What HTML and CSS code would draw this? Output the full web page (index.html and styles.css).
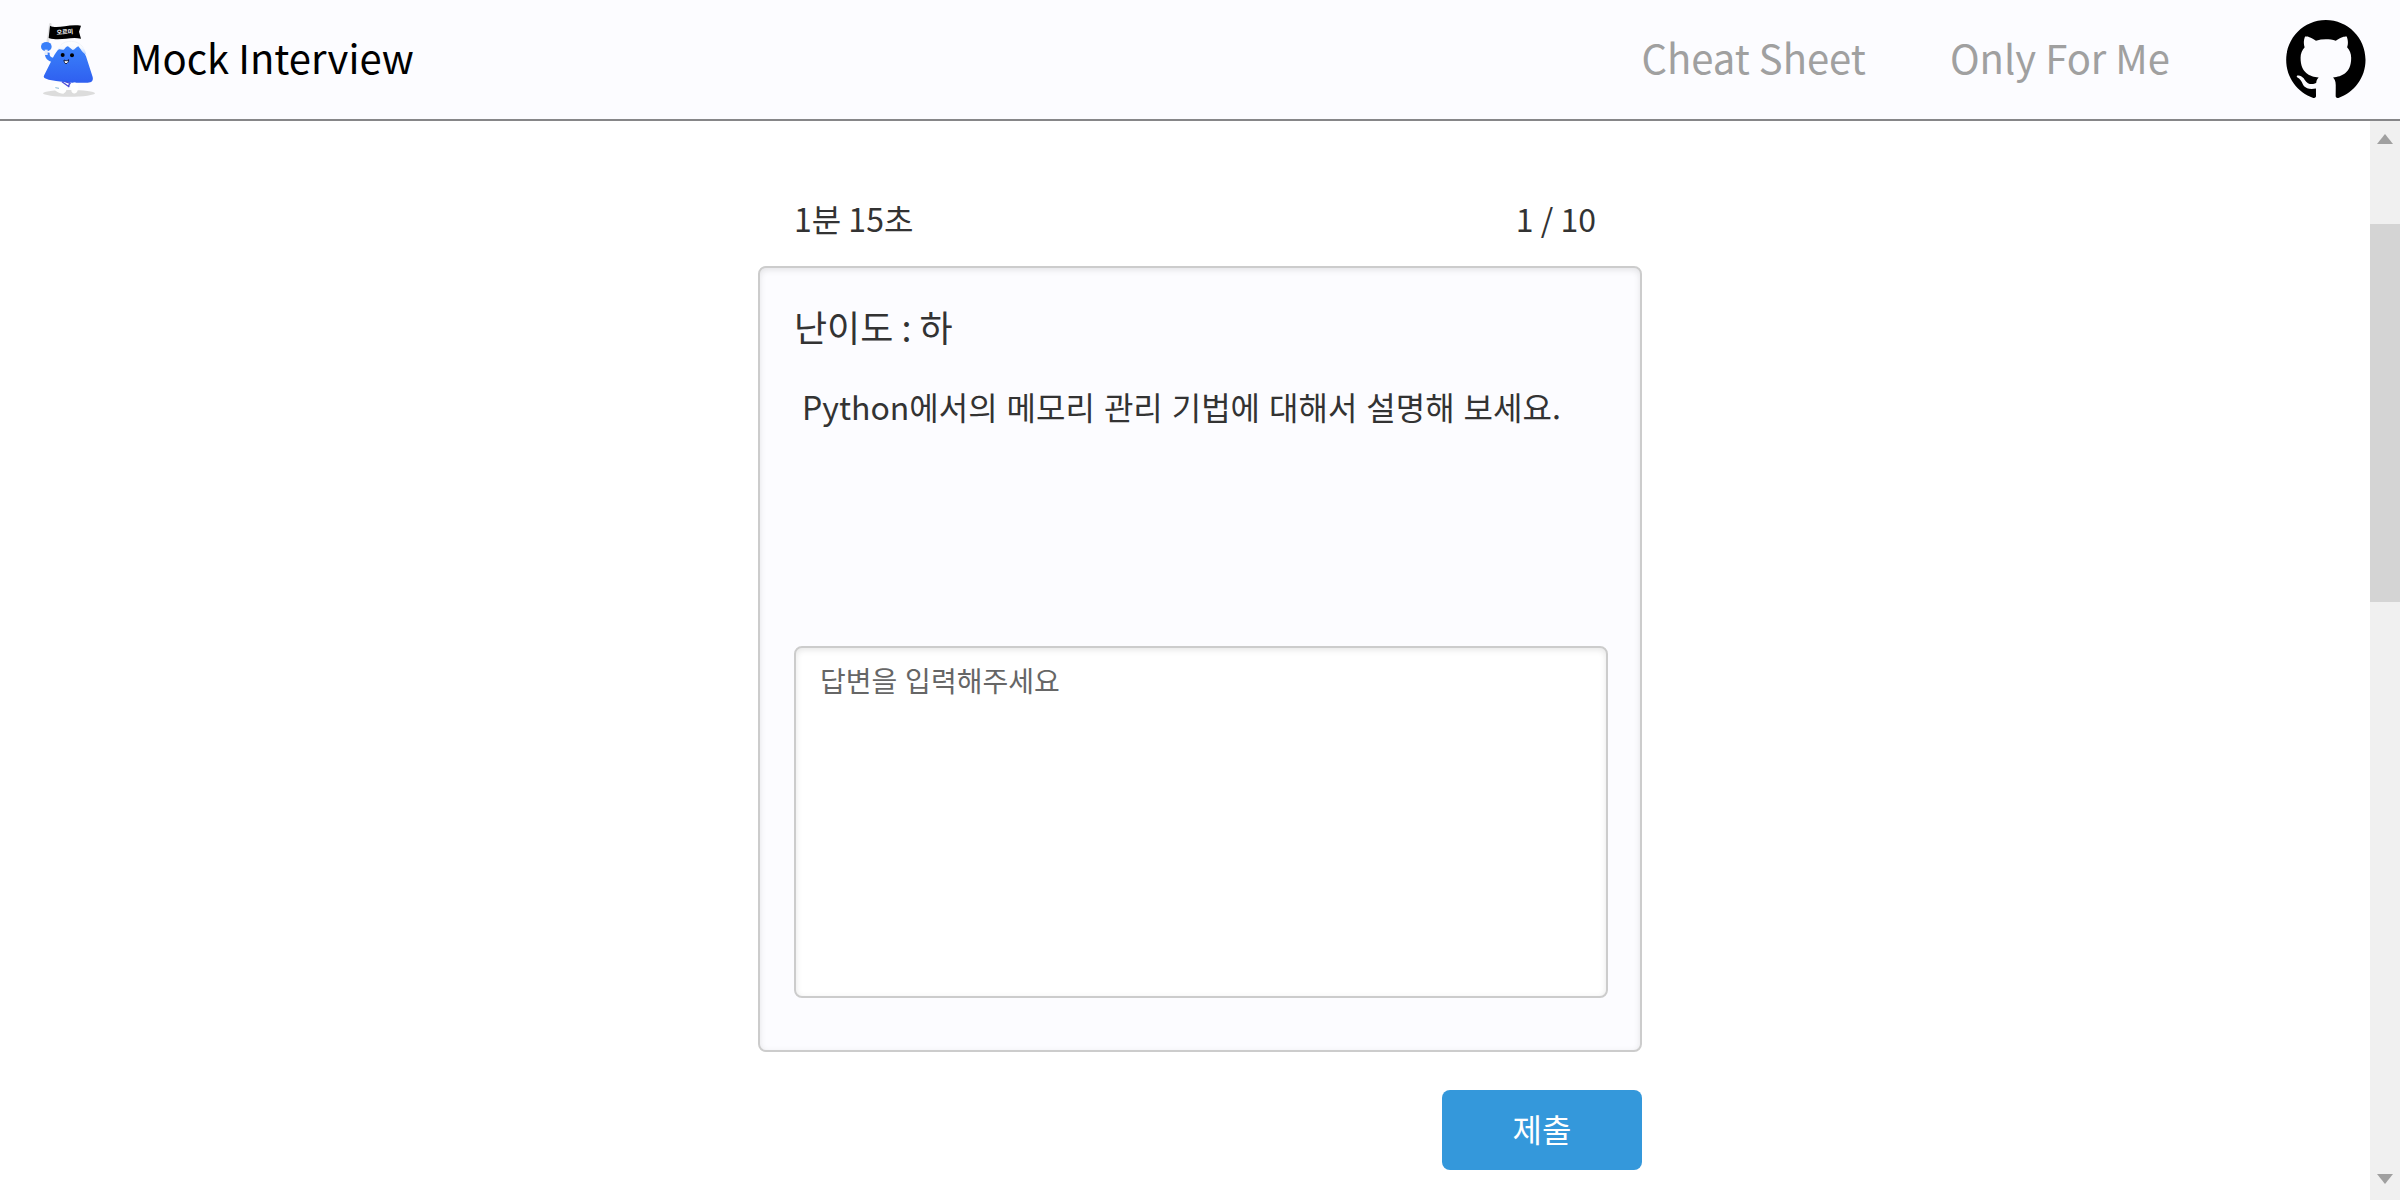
FILE: index.html
```html
<!DOCTYPE html>
<html lang="en">
<head>
<meta charset="utf-8">
<title>Mock Interview</title>
<meta name="viewport" content="width=device-width, initial-scale=1">
<link rel="stylesheet" href="styles.css">
</head>
<body>
<header class="header">
  <a class="brand" href="#">
    <svg class="mascot" viewBox="0 0 240 270" aria-hidden="true">
      <defs>
        <linearGradient id="body" x1="0" y1="0" x2="0" y2="1">
          <stop offset="0" stop-color="#3b86fc"/>
          <stop offset="1" stop-color="#2f5ff0"/>
        </linearGradient>
        <linearGradient id="snow" x1="0" y1="0" x2="0" y2="1">
          <stop offset="0" stop-color="#fff"/>
          <stop offset="0.5" stop-color="#f6f9fe"/>
          <stop offset="1" stop-color="#b4d0fd"/>
        </linearGradient>
      </defs>
      <ellipse cx="117" cy="235" rx="78" ry="10" fill="#dcdcdc"/>
      <path d="M61 28 52 90" stroke="#e2e2e4" stroke-width="8" stroke-linecap="round"/>
      <path d="M60 32C82 44 112 26 153 32L147 50 153 71C118 64 92 80 56 69Z" fill="#000"/>
      <text class="flag-text" x="80" y="59" transform="rotate(-4 80 59)">오르미</text>
      <path d="M52 112C50 126 58 134 72 136" fill="none" stroke="#397cf8" stroke-width="14"/>
      <path d="M44 178 70 126C80 108 90 92 112 84C138 78 158 98 168 124L188 186C191 199 183 204 170 203C130 205 90 200 56 194C40 190 39 186 44 178Z" fill="url(#body)"/>
      <path d="M82 107C88 86 106 77 126 77C148 79 164 94 169 120C162 114 156 112 152 103L145 94C139 96 134 105 128 105L114 94C108 93 106 101 101 104C94 106 88 99 82 107Z" fill="url(#snow)"/>
      <path d="M92 90C106 76 142 72 160 98" fill="none" stroke="#eceef4" stroke-width="2"/>
      <ellipse cx="49" cy="95" rx="16" ry="14" fill="#397ff9"/>
      <path d="M44 104H53V120H44Z" fill="#e6ecfa"/>
      <circle cx="98" cy="120" r="6" fill="#000"/>
      <circle cx="126" cy="121" r="6" fill="#000"/>
      <path d="M102 135C107 138 111 138 116 134C116 140 112 146 108 146S102 140 102 135Z" fill="#fff" stroke="#10183c" stroke-width="3"/>
      <path d="M96 200 118 216M106 200 122 206M120 202 116 214" stroke="#4a4bd8" stroke-width="4"/>
      <path d="M70 212C74 202 92 204 102 211C112 218 112 231 100 236C86 236 68 224 70 212Z" fill="#fff"/>
      <path d="M130 203C144 200 147 212 143 226C140 240 123 238 124 224C124 212 121 206 130 203Z" fill="#fff"/>
      <path d="M76 218 87 220" stroke="#88b8d8" stroke-width="3"/>
    </svg>
    <span class="nav-text">Mock Interview</span>
  </a>
  <nav class="nav">
    <a class="nav-link nav-text" href="#">Cheat Sheet</a>
    <a class="nav-link nav-text" href="#">Only For Me</a>
    <a class="github" href="#" aria-label="GitHub">
      <svg class="github-icon" viewBox="0 0 98 96" aria-hidden="true"><path d="M48.854 0C21.839 0 0 22 0 49.217c0 21.756 13.993 40.172 33.405 46.69 2.427.49 3.316-1.059 3.316-2.362 0-1.141-.08-5.052-.08-9.127-13.59 2.934-16.42-5.867-16.42-5.867-2.184-5.704-5.42-7.17-5.42-7.17-4.448-3.015.324-3.015.324-3.015 4.934.326 7.523 5.052 7.523 5.052 4.367 7.496 11.404 5.378 14.235 4.074.404-3.178 1.699-5.378 3.074-6.6-10.839-1.141-22.243-5.378-22.243-24.283 0-5.378 1.94-9.778 5.014-13.2-.485-1.222-2.184-6.275.486-13.038 0 0 4.125-1.304 13.426 5.052a46.97 46.97 0 0 1 12.214-1.63c4.125 0 8.33.571 12.213 1.63 9.302-6.356 13.427-5.052 13.427-5.052 2.67 6.763.97 11.816.485 13.038 3.155 3.422 5.015 7.822 5.015 13.2 0 18.905-11.404 23.06-22.324 24.283 1.78 1.548 3.316 4.481 3.316 9.126 0 6.6-.08 11.897-.08 13.526 0 1.304.89 2.853 3.316 2.364 19.412-6.52 33.405-24.935 33.405-46.691C97.707 22 75.788 0 48.854 0z"/></svg>
    </a>
  </nav>
</header>
<div class="viewport">
  <main class="interview">
    <div class="status">
      <span>1분 15초</span>
      <span>1 / 10</span>
    </div>
    <form class="form">
      <section class="card">
        <h1 class="level">난이도 : 하</h1>
        <label class="question" for="answer" lang="ko">Python에서의 메모리 관리 기법에 대해서 설명해 보세요.</label>
        <textarea class="answer" id="answer" lang="ko" placeholder="답변을 입력해주세요"></textarea>
      </section>
      <button class="submit" type="button">제출</button>
    </form>
  </main>
  <div class="scrollbar" aria-hidden="true">
    <svg class="arrow" viewBox="0 0 16 10"><path d="M8 0 16 10H0Z"/></svg>
    <div class="track"><div class="thumb"></div></div>
    <svg class="arrow" viewBox="0 0 16 10"><path d="M0 0H16L8 10Z"/></svg>
  </div>
</div>
</body>
</html>
```
FILE: styles.css
```css
* {
  box-sizing: border-box;
}

body {
  display: flex;
  flex-direction: column;
  min-height: 100vh;
  margin: 0;
  background: #fff;
  color: #333;
  font-family: "Noto Sans CJK KR", sans-serif;
  font-size: 32px;
  line-height: 48px;
}

.header {
  display: flex;
  align-items: center;
  justify-content: space-between;
  padding: 15px 34px 14px 30px;
  background: #fcfcff;
  border-bottom: 2px solid #868688;
}

.brand {
  display: flex;
  align-items: center;
  gap: 20px;
  color: #000;
  text-decoration: none;
}

.mascot {
  width: 80px;
  height: 90px;
}

.flag-text {
  fill: #fff;
  font-size: 18px;
  font-weight: 700;
}

.nav-text {
  padding-bottom: 6px;
  font-size: 40px;
}

.nav {
  display: flex;
  align-items: center;
  gap: 84px;
}

.nav-link {
  color: #a0a0a0;
  text-decoration: none;
}

.github {
  display: flex;
  margin-left: 32px;
  padding-bottom: 2px;
}

.github-icon {
  width: 80px;
  height: 78px;
}

.viewport {
  position: relative;
  flex: 1;
  padding: 73px 48px 30px;
}

.interview {
  max-width: 884px;
  margin: 0 auto;
}

.status {
  display: flex;
  justify-content: space-between;
  margin-bottom: 24px;
  padding: 0 46px 0 36px;
}

.form {
  display: flex;
  flex-direction: column;
}

.card {
  display: flex;
  flex-direction: column;
  padding: 32px 32px 52px 34px;
  background: #fcfcff;
  border: 2px solid #ccc;
  border-radius: 8px;
  box-shadow: inset 0 2px 6px rgba(0, 0, 0, 0.1);
}

.level {
  margin: 0 0 30px;
  font-size: 36px;
  font-weight: 400;
  line-height: 52px;
}

.question {
  min-height: 264px;
  padding: 0 8px;
}

.answer {
  height: 352px;
  padding: 12px 24px;
  background: #fff;
  border: 2px solid #ccc;
  border-radius: 8px;
  box-shadow: inset 0 2px 6px rgba(0, 0, 0, 0.1);
  color: #333;
  font: inherit;
  font-size: 28px;
  line-height: 40px;
  resize: none;
}

.answer::placeholder {
  color: #666;
}

.submit {
  align-self: flex-end;
  width: 200px;
  height: 80px;
  margin-top: 38px;
  padding: 0 0 4px;
  background: #3498db;
  border: 0;
  border-radius: 8px;
  color: #fff;
  font: inherit;
}

.scrollbar {
  position: absolute;
  top: 0;
  right: 0;
  bottom: 0;
  display: flex;
  flex-direction: column;
  align-items: center;
  width: 30px;
  padding: 13px 0 16px;
  background: #f0f0f0;
}

.arrow {
  width: 16px;
  height: 10px;
  fill: #a0a0a0;
}

.track {
  flex: 1;
  width: 100%;
  padding: 80px 0;
}

.thumb {
  height: 378px;
  background: #d4d4d4;
}
```
